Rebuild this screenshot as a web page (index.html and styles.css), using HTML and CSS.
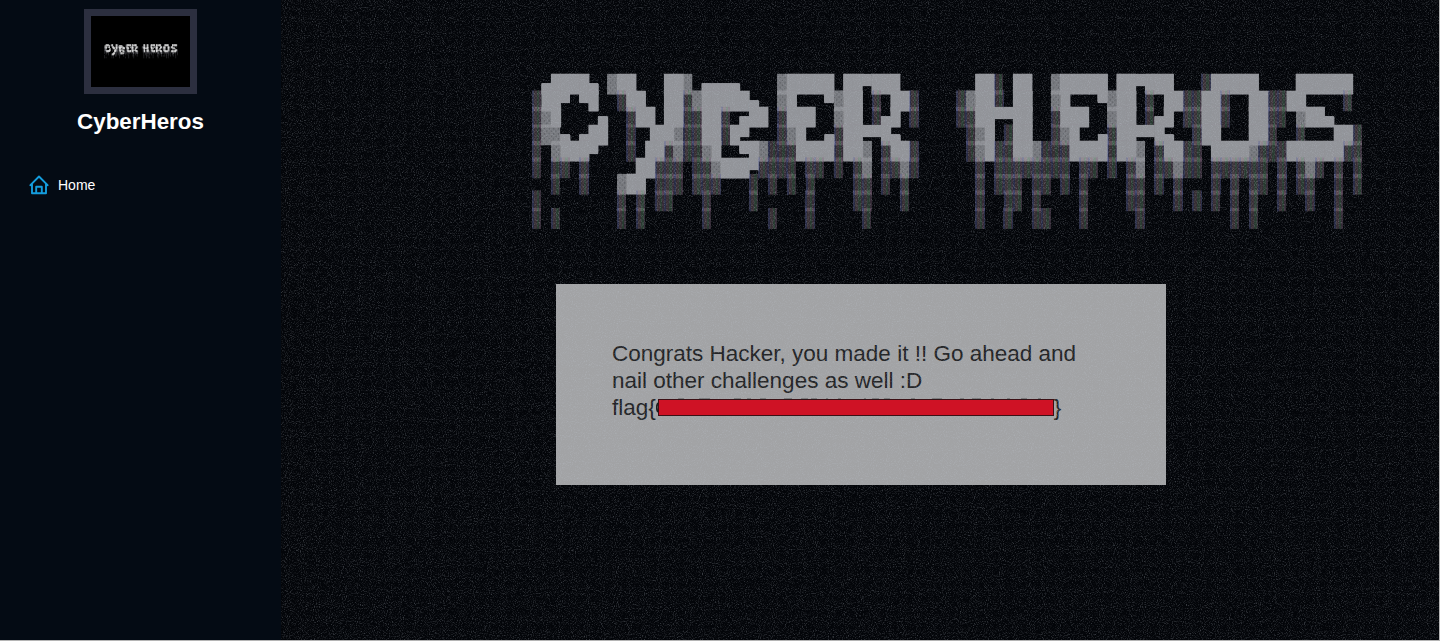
FILE: index.html
```html
<!DOCTYPE html>
<html lang="en">
<head>
<meta charset="utf-8">
<title>CyberHeros</title>
<link rel="stylesheet" href="styles.css">
</head>
<body>
<div class="page">
  <aside class="sidebar">
    <div class="thumb"><pre class="banner banner-small" aria-hidden="true"></pre></div>
    <h1 class="brand">CyberHeros</h1>
    <nav class="nav">
      <a class="nav-link">
        <svg class="home-icon" viewBox="0 0 20 20" fill="none" stroke="#149ddd" stroke-width="1.9" stroke-linejoin="round" stroke-linecap="round"><path d="M1.4 10.2 10 1.5l8.6 8.7M3 9v9.3h14V9M7.2 18v-6.2h5.6V18"/></svg>
        <span>Home</span>
      </a>
    </nav>
  </aside>
  <main class="main">
    <pre class="banner banner-large"></pre>
    <section class="card">
      <p class="message">Congrats Hacker, you made it !! Go ahead and<br>nail other challenges as well :D<br>flag{<span class="redacted"><svg class="remnants" viewBox="0 0 400 18" fill="none" stroke="#1d1e20"><path stroke-opacity=".6" d="M22 1h6M43 1h11M78 1h7M91 1h4M104 1h6M128 1h8M145 1h7M155 1h6M170 1h2M182 1h3M208 1h2M216 1h7M228 1h6M255 1h4M276 1h10M304 1h4M316 1h9M335 1h3M351 1h3M365 1h6M382 1h3"/><path d="M2 5Q-.5 9.500 2 14" stroke-width="1.800"/></svg></span>}</p>
    </section>
    <svg class="grain"><filter id="grain" x="0" y="0" width="100%" height="100%" color-interpolation-filters="sRGB"><feTurbulence type="fractalNoise" baseFrequency="0.93" numOctaves="3" seed="4"/><feColorMatrix values="0 0 0 0 .75  0 0 0 0 .78  0 0 0 0 .82  1.6 1.6 0 0 -1.55"/></filter><rect width="100%" height="100%" filter="url(#grain)"/></svg>
  </main>
</div>
<script src="banner.js"></script>
</body>
</html>
```

FILE: banner.js
```js
// Each segment is a [column, glyphs] pair on an 88-column grid.
const rows = [
  [[1,'▄████▄'],[8,'▓██   ██▓'],[18,'▄▄▄▄'],[26,'▓█████'],[33,'██▀███'],[47,'██░ ██'],[55,'▓█████'],[62,'██▀███'],[71,'▒█████'],[81,'██████']],
  [[0,'▒██▀ ▀█'],[9,'▒██  ██▒'],[17,'▓█████▄'],[26,'▓█   ▀'],[32,'▓██ ▒ ██▒'],[45,'▒▓██░ ██'],[55,'▓█   ▀'],[61,'▓██ ▒ ██▒'],[70,'▒██▒  ██▒'],[79,'▒██    ▒']],
  [[0,'▒▓█    ▄'],[10,'▒██ ██░'],[17,'▒██▒ ▄██'],[26,'▒███'],[32,'▓██ ░▄█ ▒'],[45,'░▒██▀▀██'],[55,'▒███'],[61,'▓██ ░▄█ ▒'],[70,'▒██░  ██▒'],[79,'░ ▓██▄']],
  [[0,'▒▓▓▄ ▄██'],[10,'░ ▐██▓░'],[17,'▒██░█▀'],[26,'▒▓█  ▄'],[32,'▒██▀▀█▄'],[46,'░▓█ ░██'],[55,'▒▓█  ▄'],[61,'▒██▀▀█▄'],[70,'▒██   ██░'],[81,'▒   ██▒']],
  [[0,'▒ ▓███▀'],[10,'░ ██▒▓░'],[17,'░▓█  ▀█▓░'],[26,'░▒████▒'],[32,'░██▓ ▒██▒'],[46,'░▓█▒░██▓░'],[55,'░▒████▒'],[61,'░██▓ ▒██▒'],[70,'░ ████▓▒░'],[79,'▒██████▒▒']],
  [[0,'░ ░▒ ▒'],[11,'██▒▒▒'],[17,'░▒▓███▀▒░'],[26,'░░ ▒░'],[32,'░ ▒▓ ░▒▓░'],[47,'▒ ░░▒░▒'],[54,'░░░ ▒░'],[61,'░ ▒▓ ░▒▓░'],[70,'░ ▒░▒░▒░'],[79,'▒ ▒▓▒ ▒ ░']],
  [[2,'░  ▒'],[9,'▓██ ░▒░'],[17,'▒░▒   ░ ░'],[27,'░ ░'],[34,'░▒ ░ ▒'],[47,'▒ ░▒░ ░░'],[56,'░ ░'],[63,'░▒ ░ ▒'],[72,'░ ▒ ▒░'],[79,'░ ░▒  ░ ░']],
  [[0,'░'],[9,'▒ ▒ ░░'],[18,'░    ░'],[29,'░'],[34,'░░   ░'],[47,'░  ░░ ░'],[58,'░'],[63,'░░   ░'],[70,'░ ░ ░ ▒'],[79,'░  ░  ░']],
  [[0,'░ ░'],[9,'░ ░'],[18,'░'],[25,'░'],[29,'░'],[35,'░'],[47,'░  ░  ░░'],[58,'░'],[64,'░'],[74,'░ ░'],[85,'░']]
];
const art = rows.map(segments => {
  const cells = Array(88).fill(' ');
  segments.forEach(([col, text]) => [...text].forEach((ch, i) => {
    if (ch !== ' ') cells[col + i] = ch;
  }));
  return cells.join('')
    .replace(/▓+/g, '<span class="heavy">$&</span>')
    .replace(/▄+/g, '<span class="lower">$&</span>')
    .replace(/▀+/g, '<span class="upper">$&</span>')
    .replace(/[▒░]+/g, '<span class="light">$&</span>');
}).join('\n');
document.querySelectorAll('.banner').forEach(el => { el.innerHTML = art; });
```

FILE: styles.css
```css
* { box-sizing: border-box; }
body { margin: 0; background: #b5b5b5; font-family: "Liberation Sans", Arial, sans-serif; }
.page { display: flex; width: 1439px; height: 640px; overflow: hidden; }
.sidebar { width: 281px; background: #040b14; display: flex; flex-direction: column; align-items: center; padding-top: 9px; }
.thumb { width: 113px; height: 85px; border: 7.5px solid #2c2f3f; background: #000; display: flex; align-items: center; justify-content: center; overflow: hidden; }
.brand { margin: 14px 0 0; font-size: 22.4px; line-height: 27px; font-weight: 700; color: #fff; }
.nav { width: 100%; margin-top: 39px; padding-left: 29px; }
.nav-link { display: flex; align-items: center; gap: 9px; height: 22px; color: #fff; font-size: 14px; }
.home-icon { width: 20px; height: 20px; }
.main { position: relative; flex: 1; background: #030509; display: flex; flex-direction: column; padding: 76px 0 0 251px; }
.banner { margin: 0; width: 832px; height: 154px; font-family: "DejaVu Sans Mono", monospace; font-size: 15.66px; line-height: 15.18px; color: #929499; white-space: pre; }
.banner-large { transform: scaleY(1.1); transform-origin: top; text-shadow: .5px 0 #929499; }
.banner-small { flex: none; height: 137px; transform: scale(.089, .098); color: #e2e2e2; }
.banner-large .lower { text-shadow: 0 -1px #929499, .5px 0 #929499; }
.banner-large .upper { text-shadow: 0 1.500px #929499, 0 2px #929499; }
.heavy { text-shadow: none; color: rgba(146, 148, 153, .45); background: rgba(146, 148, 153, .68); }
.light { text-shadow: none; color: rgba(150, 150, 158, .16); background: repeating-linear-gradient(90deg, rgba(90, 95, 150, .42) 0 2px, rgba(145, 115, 125, .36) 2px 4.700px, rgba(95, 135, 105, .4) 4.700px 7.500px, rgba(130, 100, 125, .38) 7.500px 9.430px); }
.banner-small .light { background: rgba(120, 120, 130, .25); }
.card { margin: 54px 0 0 24px; width: 610px; height: 201px; padding: 56px; background: #a2a3a5; }
.message { margin: 0; font-size: 22.5px; line-height: 27px; color: #232426; white-space: nowrap; }
.redacted { position: relative; z-index: 2; display: inline-block; width: 396px; height: 17px; margin: 0 0 0 2px; vertical-align: -1px; background: #cf1225; border: 1px solid #3c1015; }
.remnants { position: absolute; left: -3px; top: -2px; width: 400px; height: 18px; z-index: -1; }
.grain { position: absolute; inset: 0; width: 100%; height: 100%; pointer-events: none; opacity: .3; }
```
